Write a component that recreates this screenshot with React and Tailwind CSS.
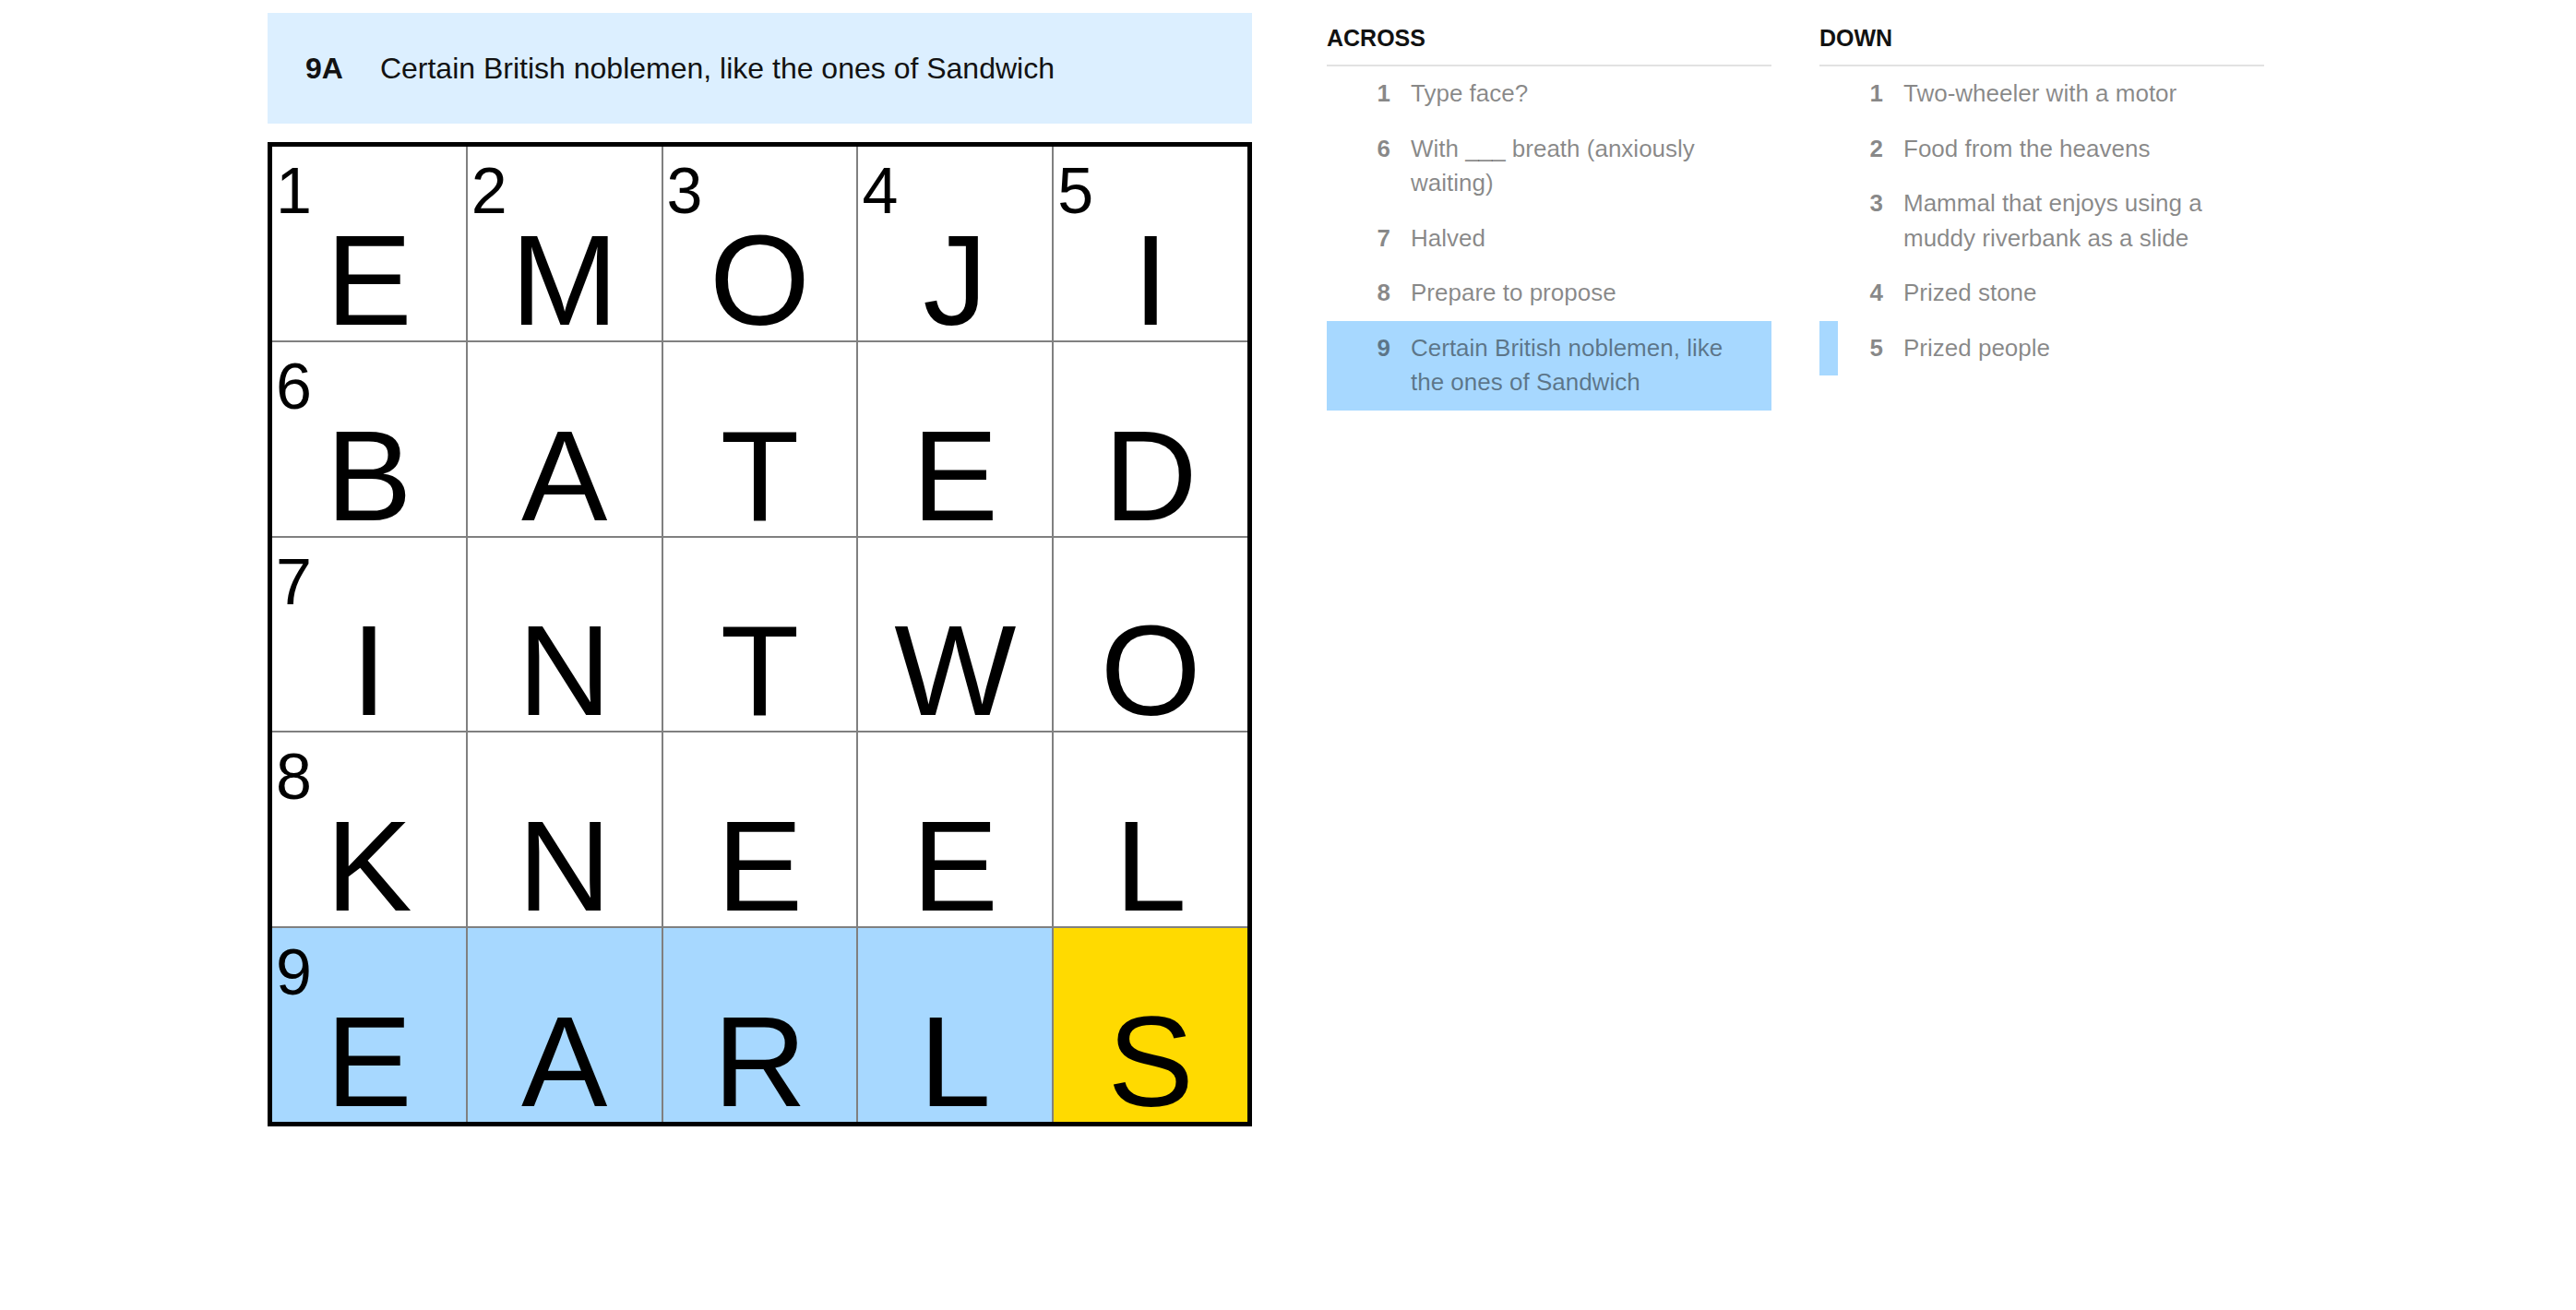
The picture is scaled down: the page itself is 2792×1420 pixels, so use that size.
const ROWS = [
  ["E", "M", "O", "J", "I"],
  ["B", "A", "T", "E", "D"],
  ["I", "N", "T", "W", "O"],
  ["K", "N", "E", "E", "L"],
  ["E", "A", "R", "L", "S"],
];

const NUMBERS = {
  "0-0": 1,
  "0-1": 2,
  "0-2": 3,
  "0-3": 4,
  "0-4": 5,
  "1-0": 6,
  "2-0": 7,
  "3-0": 8,
  "4-0": 9,
};

const ACROSS = [
  { num: 1, text: "Type face?" },
  { num: 6, text: "With ___ breath (anxiously waiting)" },
  { num: 7, text: "Halved" },
  { num: 8, text: "Prepare to propose" },
  { num: 9, text: "Certain British noblemen, like the ones of Sandwich", state: "active" },
];

const DOWN = [
  { num: 1, text: "Two-wheeler with a motor" },
  { num: 2, text: "Food from the heavens" },
  { num: 3, text: "Mammal that enjoys using a muddy riverbank as a slide" },
  { num: 4, text: "Prized stone" },
  { num: 5, text: "Prized people", state: "related" },
];

function cellBg(r, c) {
  if (r === 4 && c === 4) return "bg-[#ffda00]";
  if (r === 4) return "bg-[#a7d8ff]";
  return "bg-white";
}

function Cell({ r, c, letter }) {
  const num = NUMBERS[`${r}-${c}`];
  return (
    <div className={`relative flex items-end justify-center ${cellBg(r, c)}`}>
      {num && (
        <span className="absolute left-[4px] top-[13px] text-[70px] leading-none text-black">
          {num}
        </span>
      )}
      <span className="text-[140px] leading-[130px] text-black">{letter}</span>
    </div>
  );
}

function ClueItem({ clue }) {
  let tone = "border-transparent";
  if (clue.state === "active") tone = "border-transparent bg-[#a7d8ff]";
  if (clue.state === "related") tone = "border-[#a7d8ff]";

  return (
    <li className={`flex border-l-[20px] py-[11px] pl-[15px] pr-[46px] text-[26px] leading-[37.5px] ${tone}`}>
      <span className="w-[34px] shrink-0 text-right font-bold text-[#121212]/50">{clue.num}</span>
      <span className="ml-[22px] flex-1 text-[#121212]/50">{clue.text}</span>
    </li>
  );
}

function ClueList({ title, clues }) {
  return (
    <div className="w-[482px] pt-[12px]">
      <h2 className="border-b-2 border-[#e2e2e2] pb-[14px] text-[25px] font-bold leading-[30px] text-[#121212]">
        {title}
      </h2>
      <ol>
        {clues.map((clue) => (
          <ClueItem key={clue.num} clue={clue} />
        ))}
      </ol>
    </div>
  );
}

export default function App() {
  return (
    <div
      className="flex min-h-screen gap-[81px] bg-white pl-[290px] pt-[14px]"
      style={{ fontFamily: '"Liberation Sans", Arial, sans-serif' }}
    >
      <div className="w-[1067px]">
        {/* current clue bar */}
        <div className="flex h-[120px] items-center bg-[#dcefff] pl-[41px] text-[32px] leading-none text-[#121212]">
          <span className="mr-[40px] font-bold">9A</span>
          <span>Certain British noblemen, like the ones of Sandwich</span>
        </div>

        {/* board */}
        <div className="mt-[20px] grid h-[1067px] w-[1067px] grid-cols-5 grid-rows-5 gap-[2px] border-[5px] border-black bg-[#808080]">
          {ROWS.map((row, r) =>
            row.map((letter, c) => <Cell key={`${r}-${c}`} r={r} c={c} letter={letter} />)
          )}
        </div>
      </div>

      <div className="flex gap-[52px]">
        <ClueList title="ACROSS" clues={ACROSS} />
        <ClueList title="DOWN" clues={DOWN} />
      </div>
    </div>
  );
}
